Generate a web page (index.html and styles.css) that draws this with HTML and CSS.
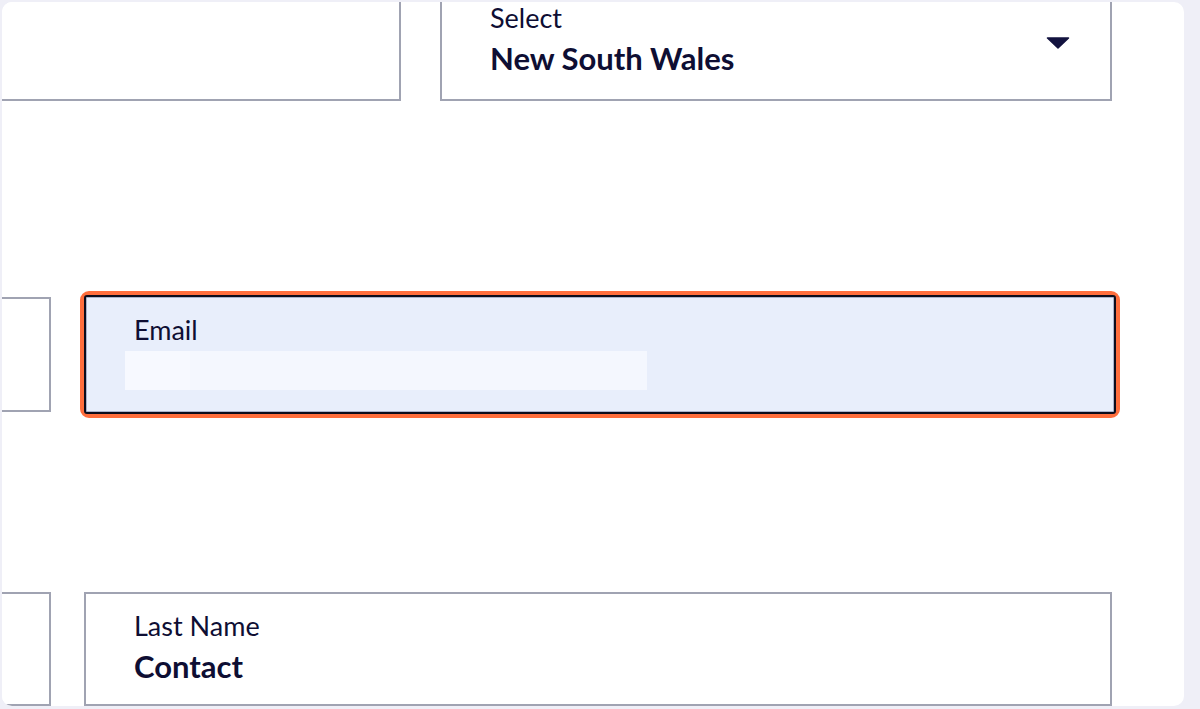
FILE: index.html
```html
<!DOCTYPE html>
<html lang="en">
<head>
    <meta charset="UTF-8">
    <meta name="viewport" content="width=device-width, initial-scale=1.0">
    <title>Contact Details</title>
    <link rel="stylesheet" href="styles.css">
</head>
<body>
    <div class="card">
        <!-- first row: cut off at the top -->
        <div class="row row-top">
            <div class="field field-wide"></div>
            <div class="field field-select">
                <span class="label">Select</span>
                <span class="value">New South Wales</span>
                <svg class="caret" width="24" height="12" viewBox="0 0 24 12">
                    <path d="M1.5 1 L22.5 1 L12 11 Z" fill="#13133f" stroke="#13133f" stroke-width="1.5" stroke-linejoin="round"/>
                </svg>
            </div>
        </div>

        <!-- focused email field -->
        <div class="row row-email">
            <div class="field field-stub"></div>
            <div class="focus-ring">
                <div class="field field-email">
                    <span class="label">Email</span>
                    <div class="autofill"><span class="autofill-start"></span></div>
                </div>
            </div>
        </div>

        <div class="row row-last">
            <div class="field field-stub"></div>
            <div class="field field-last">
                <span class="label">Last Name</span>
                <span class="value">Contact</span>
            </div>
        </div>
    </div>
</body>
</html>
```

FILE: styles.css
```css
body {
    margin: 0;
    padding: 2px 16px 0 2px;
    height: 709px;
    box-sizing: border-box;
    background-color: #efeff7;
    font-family: Lato, "Open Sans", sans-serif;
    color: #0e0e33;
    overflow: hidden;
}
.card {
    background-color: white;
    border-radius: 10px;
    height: 704px;
    overflow: hidden;
}
.row {
    display: flex;
    margin-left: -62px;
}
.row-top {
    margin-top: -18px;
    gap: 39px;
}
.row-email {
    margin-top: 190px;
    align-items: center;
    gap: 29px;
}
.row-last {
    margin-top: 174px;
    gap: 33px;
}
.field {
    position: relative;
    box-sizing: border-box;
    height: 117px;
    border: 2px solid #a0a3b2;
    background-color: white;
    padding: 16px 48px 0;
    display: flex;
    flex-direction: column;
}
.field-wide {
    width: 461px;
}
.field-select {
    width: 672px;
}
.field-stub {
    width: 111px;
    height: 115px;
}
.field-last {
    width: 1028px;
}
.row-last .field {
    height: 114px;
}
.label {
    font-size: 27px;
    line-height: 32px;
}
.value {
    font-size: 31px;
    font-weight: bold;
    line-height: 36px;
    margin-top: 6px;
}
.caret {
    position: absolute;
    right: 40px;
    top: 51px;
}
.focus-ring {
    border: 4px solid #ff6e3d;
    border-radius: 9px;
    background-color: white;
}
.field-email {
    width: 1032px;
    height: 119px;
    border: 2px solid #0c0c1c;
    border-radius: 3px;
    box-shadow: inset 0 0 0 1px #a9b3cc;
    background-color: #e8eefb;
    padding-left: 48px;
    padding-top: 17px;
}
.autofill {
    display: flex;
    margin-left: -9px;
    margin-top: 5px;
    width: 522px;
    height: 39px;
    background-color: #f4f7fe;
}
.autofill-start {
    width: 65px;
    background-color: #f7f9ff;
}
```
